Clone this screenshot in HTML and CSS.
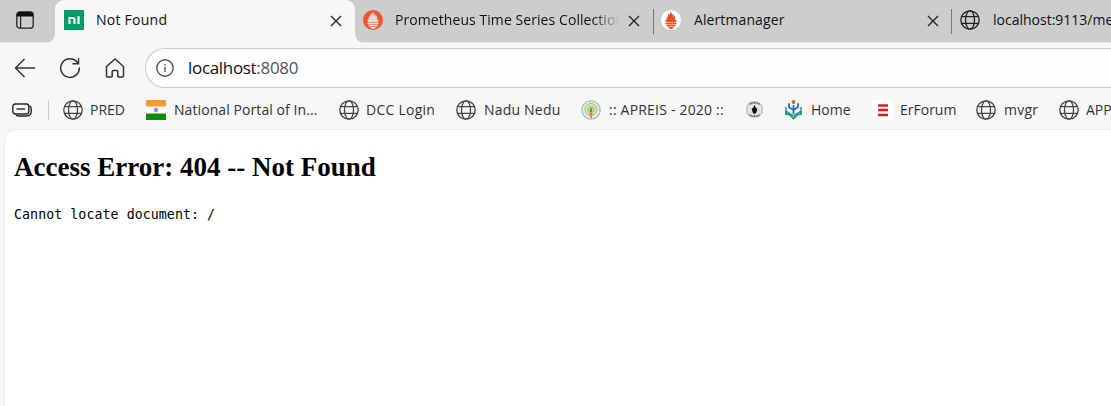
FILE: index.html
```html
<!DOCTYPE html>
<html lang="en">
<head>
<meta charset="utf-8">
<title>Not Found</title>
<link rel="stylesheet" href="styles.css">
</head>
<body>
<svg class="defs" aria-hidden="true">
  <symbol id="globe" viewBox="0 0 20 20"><g fill="none" stroke="currentColor" stroke-width="1.3"><circle cx="10" cy="10" r="9.2"/><ellipse cx="10" cy="10" rx="4.5" ry="9.2"/><path d="M1.6 6.7h16.8M1.6 13.3h16.8"/></g></symbol>
  <symbol id="close" viewBox="0 0 12 12"><path d="M1 1l10 10M11 1L1 11" fill="none" stroke="currentColor" stroke-width="1.3"/></symbol>
  <symbol id="torch" viewBox="0 0 20 20"><path d="M5.200 12.500L4.200 9.800l1.500.5L5.600 6l1.200 1.500.5-4L8.500 5l1.200-3.500L11.300 5l1-1.500.5 3.500 1.200-1.500.3 4.700 1.600-.4-1.100 2.700zM4.400 12.900h11.200v1.400H4.400zM5.600 14.800h8.800v1.600H5.600zM7 16.900h6q-.8 2-3 2t-3-2z"/></symbol>
</svg>
<header class="tabs">
  <div class="tab-menu"><svg width="18" height="18" viewBox="0 0 18 18"><rect x=".8" y=".8" width="16.4" height="16.4" rx="3" fill="none" stroke="#222" stroke-width="1.3"/><path d="M1 5.500V3.500Q1 1 3.500 1h11Q17 1 17 3.500v2z" fill="#111"/><path d="M4.600 5v12" stroke="#222" stroke-width="1.2"/></svg></div>
  <div class="tab active">
    <svg class="fav" viewBox="0 0 20 20"><path d="M0 0h20v20H0z" fill="#039b69"/><path d="M5.500 14V9.500M4.400 8H8.500Q10.500 8 10.500 10V14M14.500 6.300V14" fill="none" stroke="#fff" stroke-width="2.200"/></svg>
    <span class="title t-found">Not Found</span><svg class="close"><use href="#close"/></svg>
  </div>
  <div class="tab second">
    <svg class="fav" viewBox="0 0 20 20"><circle cx="10" cy="10" r="10" fill="#ed562e"/><use href="#torch" fill="#e4d8d4"/></svg>
    <span class="title t-prom">Prometheus Time Series Collection</span><svg class="close"><use href="#close"/></svg>
  </div>
  <div class="tab ruled">
    <svg class="fav" viewBox="0 0 20 20"><circle cx="10" cy="10" r="10" fill="#fff"/><use href="#torch" fill="#e95228"/></svg>
    <span class="title t-alert">Alertmanager</span><svg class="close"><use href="#close"/></svg>
  </div>
  <div class="tab ruled last"><svg class="fav dark"><use href="#globe"/></svg><span class="title t-local">localhost:9113/metrics</span></div>
</header>
<nav class="toolbar">
  <svg class="tool" viewBox="0 0 22 22"><path d="M21 11H1.500M10.500 2L1.500 11l9 9"/></svg>
  <svg class="tool" viewBox="0 0 22 22"><path d="M20.300 10.500A9.300 9.300 0 1 1 17.800 4.700L19.500 6.500M19.500 1.300v5.500h-6"/></svg>
  <svg class="tool" viewBox="0 0 22 22"><path d="M2.500 9.500L11 2l8.500 7.500V19q0 1-1 1h-4q-.7 0-.7-1v-4.500q0-1-1-1H9.200q-1 0-1 1V19q0 1-.7 1h-4q-1 0-1-1z"/></svg>
  <div class="address">
    <svg class="info" viewBox="0 0 18 18"><circle cx="9" cy="9" r="8.200" fill="none" stroke="#555" stroke-width="1.400"/><path d="M9 8v5M9 5v1.500" stroke="#555" stroke-width="1.400"/></svg>
    <span class="url">localhost<i>:8080</i></span>
  </div>
</nav>
<nav class="bookmarks">
  <div class="group"><svg width="20" height="14" viewBox="0 0 20 14" fill="none" stroke="#292929" stroke-width="1.400"><path d="M17.500 3q1.700.5 1.700 3v2.500q0 4.500-4.500 4.500H7Q5 13 4 12"/><rect x=".8" y="1" width="16" height="10" rx="2.500"/><path d="M4.500 6h8.500"/></svg></div>
  <a><svg class="fav"><use href="#globe"/></svg><span class="b-pred">PRED</span></a>
  <a><svg class="fav" viewBox="0 0 20 20"><path fill="#ff9933" d="M0 0h20v7H0z"/><path fill="#fff" d="M0 6.500h20v7H0z"/><path fill="#118b0b" d="M0 13.500h20v6.500H0z"/><circle cx="10" cy="10" r="2" fill="#8984c7" stroke="#aaa5dd"/></svg><span class="b-nat">National Portal of In...</span></a>
  <a><svg class="fav"><use href="#globe"/></svg><span class="b-dcc">DCC Login</span></a>
  <a><svg class="fav"><use href="#globe"/></svg><span class="b-nadu">Nadu Nedu</span></a>
  <a><svg class="fav" viewBox="0 0 20 20"><circle cx="10" cy="10" r="9" fill="#e8f1ea" stroke="#8fc1a4" stroke-width="1.500" stroke-dasharray="2 .5"/><circle cx="10" cy="9.500" r="6" fill="#f6e294" stroke="#80ba98"/><circle cx="10" cy="9.500" r="3.200" fill="#c5dc9d" stroke="#8fc090"/><path d="M9 8h2v4H9z" fill="#4f9670"/><path d="M10 13v5M8.500 14h3" stroke="#f27c4a" stroke-width="2"/></svg><span class="b-ap">:: APREIS - 2020 ::</span></a>
  <a><svg class="crest" viewBox="0 0 18 18"><path d="M5 1h8l4 4v8l-4 4H5l-4-4V5z" fill="#e4e4e4" stroke="#aaa"/><path d="M3.500 3.500q5.500-3 11 0M3.500 14.500q5.500 3 11 0" fill="none" stroke="#666" stroke-width="1.700" stroke-dasharray="1.200 .5"/><path d="M9 4l1 2.500 2 2-1 3.500-1 1.500H8L7 12 6 8.500l2-2z" fill="#111"/></svg></a>
  <a><svg class="home-mark" viewBox="0 0 20 20" fill="none"><circle cx="9.500" cy="2" r="1.900" fill="#f15b28"/><path d="M5 3.200v4L9.500 10l4.500-2.800v-4M9.500 5v9" stroke="#246cb3" stroke-width="1.800"/><path d="M2 7v4.200l7.500 4.600 7.500-4.600V7" stroke="#3182ba" stroke-width="1.400"/><path d="M2 11v3l3.500.5 4 4 4-4 3.500-.5v-3" stroke="#20a158" stroke-width="1.900"/></svg><span class="b-home">Home</span></a>
  <a><svg class="fav" viewBox="0 0 20 20"><path fill="#fff" d="M0 0h20v20H0z"/><path d="M5 5.500h10M5 10h10M5 15h10" stroke="#e9131b" stroke-width="2.500"/></svg><span class="b-er">ErForum</span></a>
  <a><svg class="fav"><use href="#globe"/></svg><span class="b-mv">mvgr</span></a>
  <a class="clip"><svg class="fav"><use href="#globe"/></svg><span class="b-app">APP</span></a>
</nav>
<main class="page"><h2>Access Error: 404 -- Not Found</h2><pre>Cannot locate document: /</pre></main>
</body>
</html>
```
FILE: styles.css
```css
* { box-sizing: border-box; }
body { margin: 0; height: 406px; overflow: hidden; background: #f7f7f7; color: #111; font: 14px/20px "Open Sans", "Noto Sans", sans-serif; display: flex; flex-direction: column; }
svg { flex: none; display: block; }
.defs { display: none; }
.tabs { height: 42px; flex: none; display: grid; grid-template-columns: 55px 300px 298px 298px minmax(0, 1fr); background: #cdcdcd; box-shadow: 0 1px #e4e4e4; }
.tab-menu { padding: 11px 0 0 16px; }
.tab { position: relative; display: flex; align-items: center; height: 42px; padding: 0 13px 2px 9px; min-width: 0; }
.second { padding-left: 8px; padding-right: 13px; }
.active { background: #f7f7f7; border-radius: 9px 9px 0 0; height: 43px; padding-bottom: 3px; }
.active::before, .active::after { content: ""; position: absolute; bottom: 0; width: 9px; height: 9px; }
.active::before { left: -9px; background: radial-gradient(circle at 0 0, transparent 8.5px, #f7f7f7 9px); }
.active::after { right: -9px; background: radial-gradient(circle at 100% 0, transparent 8.5px, #f7f7f7 9px); }
.ruled { padding-left: 8px; padding-right: 12px; }
.last { padding-left: 9px; padding-right: 0; }
.ruled::before { content: ""; position: absolute; left: 0; top: 9px; width: 1px; height: 25px; background: #777; }
.fav { width: 20px; height: 20px; color: #444; }
.dark { color: #222; }
.title { margin-left: 12px; flex: 1; white-space: nowrap; overflow: hidden; }
.t-found { letter-spacing: .25px; }
.t-prom { letter-spacing: .07px; }
.t-alert { letter-spacing: .1px; margin-left: 13px; }
.t-local { margin-left: 13px; }
.second .title { margin-right: 8px; -webkit-mask-image: linear-gradient(90deg, #000 88%, transparent); mask-image: linear-gradient(90deg, #000 88%, transparent); }
.close { width: 12px; height: 12px; color: #222; margin-top: 2px; }
.toolbar { height: 51px; flex: none; display: flex; align-items: center; padding: 0 0 0 14px; }
.tool { width: 22px; height: 22px; margin-right: 23px; fill: none; stroke: #333; stroke-width: 1.5; }
.tool + .tool + .tool { margin-right: 19px; }
.address { height: 40px; flex: 1; border: 1px solid #ccc; border-right: 0; border-radius: 20px 0 0 20px; background: #fdfdfd; display: flex; align-items: center; padding-left: 10px; }
.info { width: 18px; height: 18px; }
.url { margin-left: 14px; font-size: 17px; letter-spacing: -.32px; }
.url i { font-style: normal; color: #555; }
.bookmarks { height: 37px; flex: none; display: grid; grid-template-columns: 63px 83px 193px 117px 125px 165px 38px 89px 103px 83px minmax(0, 1fr); align-items: center; padding-bottom: 4px; color: #333; }
.bookmarks a { display: flex; align-items: center; gap: 8px; white-space: nowrap; }
.bookmarks .clip { overflow: hidden; }
.b-pred, .b-home, .b-er { margin-left: -1px; }
.b-nat { letter-spacing: .08px; }
.b-dcc { margin-left: -1px; letter-spacing: .25px; }
.b-nadu, .b-ap { letter-spacing: .2px; }
.b-mv { letter-spacing: .25px; }
.b-app { margin-left: -1px; }
.group { width: 49px; height: 20px; display: flex; align-items: center; padding-left: 12px; border-right: 1px solid #ccc; }
.crest { width: 17px; height: 17px; }
.home-mark { width: 20px; height: 20px; }
.page { margin-left: 5px; flex: 1; background: #fff; border-radius: 10px 0 0; box-shadow: 0 0 2px #ccc; padding: 20px 9px; color: #000; }
h2 { margin: 0; font: bold 27px/34px "Liberation Serif", serif; }
pre { margin: 22px 0 0; font: 13.3px/18px "DejaVu Sans Mono", monospace; letter-spacing: .04px; }
```
